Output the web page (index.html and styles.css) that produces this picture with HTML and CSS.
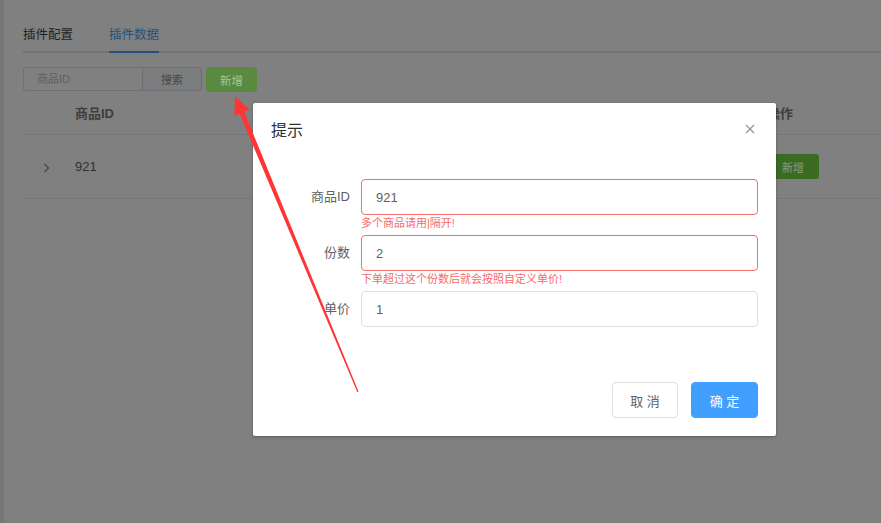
FILE: index.html
```html
<!DOCTYPE html>
<html lang="zh-CN">
<head>
<meta charset="utf-8">
<title>插件数据</title>
<link rel="stylesheet" href="styles.css">
</head>
<body>
<div class="page">
  <div class="tabs">
    <div class="tab">插件配置</div>
    <div class="tab active">插件数据</div>
  </div>
  <div class="toolbar">
    <div class="search">
      <input class="search-input" placeholder="商品ID">
      <button class="search-btn">搜索</button>
    </div>
    <button class="btn-green">新增</button>
  </div>
  <div class="table">
    <div class="thead">
      <div class="c-expand"></div>
      <div class="c-id">商品ID</div>
      <div class="c-op">操作</div>
    </div>
    <div class="trow">
      <div class="c-expand">
        <svg class="chev" width="7" height="10" viewBox="0 0 7 10"><path d="M1.5 1 L5.5 5 L1.5 9" fill="none" stroke="#454545" stroke-width="1.2"/></svg>
      </div>
      <div class="c-id">921</div>
      <div class="c-op"><button class="btn-row">新增</button></div>
    </div>
  </div>
</div>

<div class="mask">
  <div class="dialog">
    <div class="dlg-header">
      <span class="dlg-title">提示</span>
      <span class="dlg-close">
        <svg width="12" height="12" viewBox="0 0 12 12"><path d="M2 2 L10 10 M10 2 L2 10" stroke="#909399" stroke-width="1.2" fill="none"/></svg>
      </span>
    </div>
    <div class="dlg-body">
      <div class="form-item">
        <label class="label">商品ID</label>
        <input class="field is-error" value="921">
        <div class="error">多个商品请用|隔开!</div>
      </div>
      <div class="form-item">
        <label class="label">份数</label>
        <input class="field is-error" value="2">
        <div class="error">下单超过这个份数后就会按照自定义单价!</div>
      </div>
      <div class="form-item last">
        <label class="label">单价</label>
        <input class="field" value="1">
      </div>
    </div>
    <div class="dlg-footer">
      <button class="btn-cancel">取 消</button>
      <button class="btn-primary">确 定</button>
    </div>
  </div>
</div>

<svg class="annot" width="881" height="523" viewBox="0 0 881 523">
  <polygon fill="#ff3535" points="235,96 249.5,109.5 244.2,111.8 358.6,391.8 357.4,392.2 239.6,113.8 234.3,115.8"/>
</svg>
</body>
</html>
```

FILE: styles.css
```css
* { box-sizing: border-box; }
html, body { margin: 0; padding: 0; }
body {
  width: 881px;
  height: 523px;
  overflow: hidden;
  background: #808080;
  font-family: "Liberation Sans", "Noto Sans CJK SC", sans-serif;
  position: relative;
}
button, input { font-family: inherit; margin: 0; }

.page {
  height: 523px;
  border-left: 4px solid #777777;
  padding: 14px 0 0 19px;
}

.tabs {
  display: flex;
  border-bottom: 2px solid #727374;
  font-size: 12.5px;
  line-height: 22px;
  color: #222;
}
.tab {
  padding: 10px 18px 5px;
  position: relative;
}
.tab:first-child { padding-left: 0; }
.tab.active { color: #22507f; }
.tab.active::after {
  content: "";
  position: absolute;
  left: 18px;
  right: 18px;
  bottom: -2px;
  height: 2px;
  background: #22507f;
}

.toolbar {
  display: flex;
  gap: 4px;
  margin-top: 14px;
  height: 24px;
}
.search { display: flex; }
.search-input {
  width: 119px;
  height: 24px;
  border: 1px solid #6e7073;
  border-right: none;
  border-radius: 3px 0 0 3px;
  background: #808080;
  padding: 0 0 0 13px;
  font-size: 11px;
  color: #303133;
  outline: none;
}
.search-input::placeholder { color: #5e6064; }
.search-btn {
  width: 60px;
  height: 24px;
  border: 1px solid #6e7073;
  border-radius: 0 3px 3px 0;
  background: #7b7c7d;
  color: #46484a;
  font-size: 11px;
  padding: 0;
}
.btn-green {
  width: 51px;
  height: 25px;
  border: none;
  border-radius: 3px;
  background: #5a8a3f;
  color: #a9c49b;
  font-size: 11.5px;
  padding: 0;
}

.table { width: 858px; }
.thead, .trow {
  display: flex;
  align-items: center;
  border-bottom: 1px solid #75777a;
}
.thead {
  height: 44px;
  font-size: 13px;
  font-weight: bold;
  color: #3d3e40;
}
.trow {
  height: 64px;
  font-size: 13px;
  color: #2f3033;
}
.c-expand { width: 42px; padding-left: 20px; display: flex; align-items: center; }
.c-id { flex: 1; padding-left: 10px; }
.c-op { width: 124px; padding-left: 10px; }
.chev { display: block; margin-top: 2px; }
.btn-row {
  width: 52px;
  height: 25px;
  border: none;
  border-radius: 3px;
  background: #3b6b22;
  color: #8c9d84;
  font-size: 11px;
  padding: 0;
}

.mask {
  position: absolute;
  inset: 0;
  padding: 103px 0 0 253px;
}
.dialog {
  width: 523px;
  background: #fff;
  border-radius: 2px;
  box-shadow: 0 1px 3px rgba(0, 0, 0, 0.3);
}
.dlg-header {
  position: relative;
  padding: 16px 20px 0 18px;
  height: 40px;
}
.dlg-title {
  font-size: 16px;
  line-height: 24px;
  color: #303133;
}
.dlg-close {
  position: absolute;
  top: 20px;
  right: 20px;
  width: 12px;
  height: 12px;
  display: block;
}
.dlg-close svg { display: block; }

.dlg-body { padding: 36px 18px 0 20px; }
.form-item {
  display: flex;
  position: relative;
  margin-bottom: 20px;
}
.form-item.last { margin-bottom: 0; }
.label {
  width: 88px;
  padding-right: 11px;
  text-align: right;
  line-height: 36px;
  font-size: 13px;
  color: #606266;
}
.field {
  flex: 1;
  height: 36px;
  border: 1px solid #dcdfe6;
  border-radius: 4px;
  padding: 0 14px;
  font-size: 13px;
  color: #606266;
  outline: none;
  background: #fff;
}
.field.is-error { border-color: #f56c6c; }
.error {
  position: absolute;
  top: 100%;
  left: 88px;
  padding-top: 3px;
  font-size: 11px;
  line-height: 1;
  color: #f56c6c;
}

.dlg-footer {
  display: flex;
  justify-content: flex-end;
  gap: 13px;
  padding: 55px 18px 18px;
}
.btn-cancel, .btn-primary {
  height: 36px;
  border-radius: 4px;
  font-size: 13px;
  padding: 0;
}
.btn-cancel {
  width: 66px;
  border: 1px solid #dcdfe6;
  background: #fff;
  color: #606266;
}
.btn-primary {
  width: 67px;
  border: 1px solid #409eff;
  background: #409eff;
  color: #fff;
}

.annot {
  position: absolute;
  left: 0;
  top: 0;
  pointer-events: none;
}
```
